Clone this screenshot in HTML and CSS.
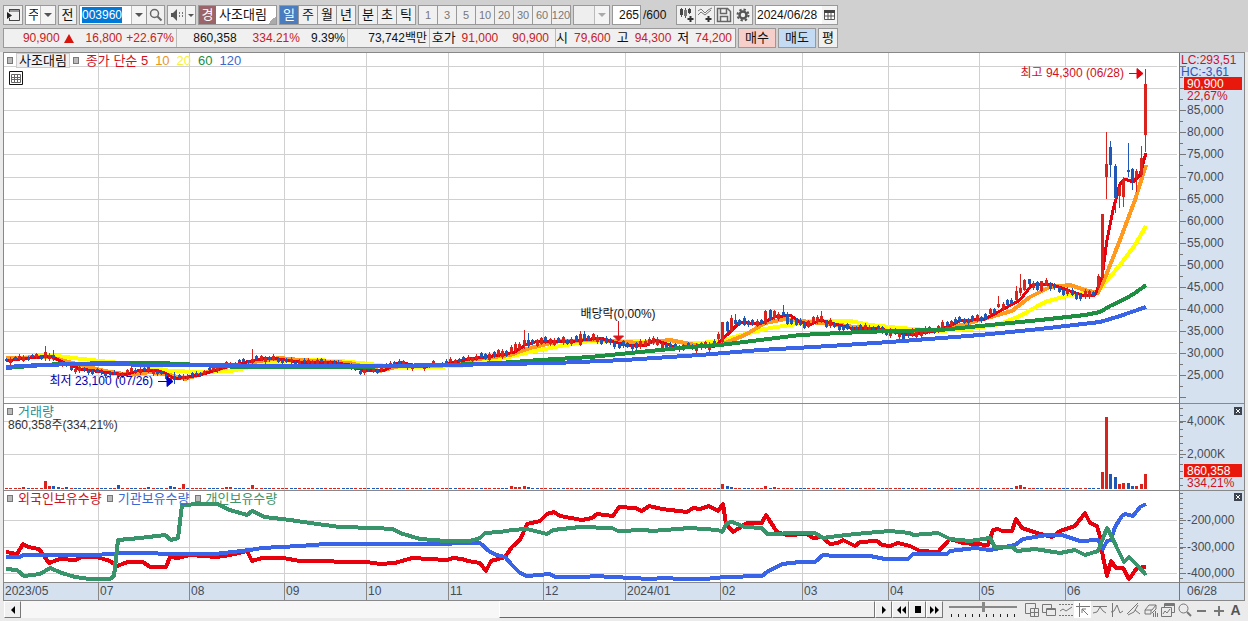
FILE: index.html
```html
<!DOCTYPE html>
<html lang="ko">
<head>
    <meta charset="UTF-8">
    <meta name="viewport" content="width=device-width, initial-scale=1.0">
    <title>사조대림</title>
    <link rel="stylesheet" href="styles.css">
</head>
<body>

    <header class="toolbar">
        <div class="tool-row">
            <button type="button" class="btn icon-btn" aria-label="Menu">
                <svg width="16" height="14" viewBox="0 0 16 14"><path d="M4.5 1.5h10v11h-10M4.5 1v3M4.5 10v3" fill="none" stroke="#444"/><path d="M5 3h9" stroke="#444"/><path d="M2 4l5 3.500-5 3.500z" fill="#222"/></svg>
            </button>
            <div class="combo combo-small">
                <select aria-label="Type"><option>주</option></select>
                <span class="arrow"></span>
            </div>
            <button type="button" class="btn btn-thin">전</button>
            <div class="group">
                <div class="combo combo-code">
                    <input type="text" id="code" value="003960" aria-label="Code">
                    <button type="button" class="arrow" aria-label="History"></button>
                </div>
                <button type="button" class="btn btn-thin icon-btn" aria-label="Search">
                    <svg width="14" height="14" viewBox="0 0 14 14"><circle cx="5.500" cy="5.500" r="4" fill="none" stroke="#666" stroke-width="1.500"/><path d="M8.500 8.500l4 4" stroke="#666" stroke-width="2"/></svg>
                </button>
            </div>
            <div class="group">
                <button type="button" class="btn btn-thin icon-btn" aria-label="Sound">
                    <svg width="14" height="12" viewBox="0 0 14 12"><path d="M1 4h2l4-4v12l-4-4H1z" fill="#555"/><path d="M9.500 3v6M12.500 3v6" stroke="#777" stroke-dasharray="2 1"/></svg>
                </button>
                <button type="button" class="arrow arrow-thin" aria-label="Sound options"></button>
            </div>
            <div class="stock"><span class="badge">경</span><span class="stock-name">사조대림</span></div>
            <div class="group">
                <button type="button" class="btn active">일</button><button type="button" class="btn">주</button><button type="button" class="btn">월</button><button type="button" class="btn">년</button>
            </div>
            <div class="group">
                <button type="button" class="btn">분</button><button type="button" class="btn">초</button><button type="button" class="btn">틱</button>
            </div>
            <div class="group muted">
                <button type="button" class="btn">1</button><button type="button" class="btn">3</button><button type="button" class="btn">5</button><button type="button" class="btn">10</button><button type="button" class="btn">20</button><button type="button" class="btn">30</button><button type="button" class="btn">60</button><button type="button" class="btn">120</button>
            </div>
            <div class="combo combo-off">
                <select aria-label="Interval" disabled><option></option></select>
                <span class="arrow"></span>
            </div>
            <div class="count">
                <input type="text" id="count" value="265" aria-label="Count"><label for="count">/600</label>
            </div>
            <div class="group">
                <button type="button" class="btn icon-btn" aria-label="Add candles">
                    <svg width="16" height="16" viewBox="0 0 16 16"><path d="M3.500 1v9M7.500 1v10M11.500 1v6" stroke="#555"/><path d="M2 2h3v6H2zM10 2h3v4h-3z" fill="#444"/><path d="M6 3h3v6H6z" fill="#777"/><path d="M12.500 9v6M9.500 12h6" stroke="#333" stroke-width="2"/></svg>
                </button>
                <button type="button" class="btn icon-btn" aria-label="Add indicator">
                    <svg width="16" height="16" viewBox="0 0 16 16"><path d="M1 4l3-2 4 4 3-3 4-2M1 8l3-3 4 3 6-5" fill="none" stroke="#777"/><path d="M11.500 9v6M8.500 12h6" stroke="#333" stroke-width="2"/></svg>
                </button>
                <button type="button" class="btn icon-btn" aria-label="Save">
                    <svg width="16" height="16" viewBox="0 0 16 16"><path d="M1.500 1.500h10l3 3v10h-13zM4.500 1.500v5h6v-5M4.500 14.500v-5h7v5" fill="none" stroke="#666" stroke-width="1.500"/></svg>
                </button>
                <button type="button" class="btn icon-btn" aria-label="Settings">
                    <svg width="16" height="16" viewBox="0 0 16 16"><circle cx="8" cy="8" r="5.500" fill="none" stroke="#555" stroke-width="2" stroke-dasharray="2.300 2"/><circle cx="8" cy="8" r="3.500" fill="none" stroke="#555" stroke-width="2.500"/></svg>
                </button>
            </div>
            <div class="combo combo-date">
                <input type="text" value="2024/06/28" aria-label="Date">
                <button type="button" class="cal" aria-label="Calendar">
                    <svg width="11" height="10" viewBox="0 0 11 10"><path d="M.5.500h10v9H.5zM4 3v6M7 3v6M1 6h9" fill="#fff" stroke="#555"/><path d="M0 0h11v3H0z" fill="#444"/></svg>
                </button>
            </div>
        </div>

        <div class="tool-row">
            <div class="quote">
                <div class="cell cell-price up"><span>90,900</span><span class="tri"></span><span class="diff">16,800</span><span>+22.67%</span></div>
                <div class="cell cell-vol"><span>860,358</span><span class="up">334.21%</span><span class="rate">9.39%</span></div>
                <div class="cell cell-amt"><span>73,742백만</span></div>
                <div class="cell cell-ask"><span class="ko">호가</span><span class="up">91,000</span><span class="up bid">90,900</span></div>
                <div class="cell cell-ohl"><span class="ko">시</span><span class="up">79,600</span><span class="ko">고</span><span class="up">94,300</span><span class="ko">저</span><span class="up">74,200</span></div>
            </div>
            <button type="button" class="btn ko buy">매수</button>
            <button type="button" class="btn ko sell">매도</button>
            <button type="button" class="btn">평</button>
        </div>
    </header>

    <main class="chart">
        <section class="pane pane-price">
            <svg class="plot" id="price"></svg>
            <div class="legend">
                <i class="dot"></i><button type="button" class="tag">사조대림</button><i class="dot"></i>
                <span class="ma5">종가 단순 5</span><span class="ma10">10</span><span class="ma20">20</span><span class="ma60">60</span><span class="ma120">120</span>
            </div>
            <button type="button" class="table-btn" aria-label="Table">
                <svg width="14" height="14" viewBox="0 0 14 14"><path d="M.5.500h13v13H.5z" fill="#fff" stroke="#111"/><path d="M2.500 3.500h9v8h-9zM2.500 6.500h9M2.500 8.500h9M5.500 3v8M8.500 3v8" fill="none" stroke="#666"/></svg>
            </button>
        </section>
        <svg class="axis" id="priceAxis"></svg>

        <section class="pane">
            <svg class="plot" id="volume"></svg>
            <div class="legend"><i class="dot"></i><span class="teal">거래량</span></div>
            <div class="volume-now">860,358주(334,21%)</div>
        </section>
        <svg class="axis" id="volumeAxis"></svg>

        <section class="pane">
            <svg class="plot" id="holding"></svg>
            <div class="legend">
                <i class="dot"></i><span class="foreign">외국인보유수량</span><i class="dot"></i><span class="inst">기관보유수량</span><i class="dot"></i><span class="person">개인보유수량</span>
            </div>
        </section>
        <svg class="axis" id="holdingAxis"></svg>

        <svg class="dates" id="dates"></svg>
        <div class="last-date">06/28</div>
    </main>

    <footer class="bottom">
        <div class="scroll">
            <button type="button" class="nav" aria-label="Scroll left"><svg width="6" height="8" viewBox="0 0 6 8"><path d="M5 0v8L1 4z"/></svg></button>
            <div class="track"><div class="thumb"></div></div>
        </div>
        <div class="player">
            <button type="button" class="nav" aria-label="Play"><svg width="6" height="8" viewBox="0 0 6 8"><path d="M1 0v8l4-4z"/></svg></button>
            <button type="button" class="nav" aria-label="Back"><svg width="10" height="8" viewBox="0 0 10 8"><path d="M5 0v8L1 4zM10 0v8L6 4z"/></svg></button>
            <button type="button" class="nav" aria-label="Stop"><svg width="6" height="7" viewBox="0 0 6 7"><path d="M0 0h6v7H0z"/></svg></button>
            <button type="button" class="nav" aria-label="Forward"><svg width="10" height="8" viewBox="0 0 10 8"><path d="M0 0v8l4-4zM5 0v8l4-4z"/></svg></button>
        </div>
        <div class="speed">
            <input type="range" min="0" max="10" value="5" aria-label="Speed">
            <div class="ticks"></div>
        </div>
        <div class="tools">
            <button type="button" aria-label="New"><svg width="14" height="14" viewBox="0 0 14 14"><path d="M5 10.500H.5v-10h10V5M5.500 5.500h8v8h-8zM9.500 6v7M6 9.500h7"/></svg></button>
            <button type="button" aria-label="Copy"><svg width="14" height="14" viewBox="0 0 14 14"><path d="M4 9.500H.5v-8h9V5M4.500 5.500h9v7h-9z"/><path d="M5 6.500h8"/></svg></button>
            <button type="button" aria-label="Fit"><svg width="14" height="14" viewBox="0 0 14 14"><path d="M1 8l3-2 3 2 6-4"/><path d="M0 1.500h14M0 12.500h14" stroke-dasharray="2 1"/></svg></button>
            <button type="button" class="on" aria-label="Cursor"><svg width="14" height="14" viewBox="0 0 14 14"><path d="M0 3.500h14M3.500 0v14M6 6l6 6M6 10V6h4"/></svg></button>
            <button type="button" aria-label="Level"><svg width="14" height="14" viewBox="0 0 14 14"><path d="M0 3.500h14M0 10l4-1 3-5 3 4 3 2"/></svg></button>
            <button type="button" aria-label="Bars"><svg width="14" height="14" viewBox="0 0 14 14"><path d="M2.500 0v14M1 9l3-1 3-6 3 8 3-2"/></svg></button>
            <button type="button" aria-label="Trend"><svg width="14" height="14" viewBox="0 0 14 14"><path d="M0 11L11 0M1 12l6-3 4-7M8 7l5 4"/></svg></button>
            <button type="button" aria-label="Erase"><svg width="14" height="14" viewBox="0 0 14 14"><path d="M1 7l4-5h7l-4 5zM1 7v4h6V7M8 10l4-4V2M9.500 10v4M11.500 8v6M13.500 10v4"/></svg></button>
            <button type="button" aria-label="Windows"><svg width="14" height="14" viewBox="0 0 14 14"><path d="M.5 4.500h10v9H.5zM3.500 4V.5h10v9H11M2 11l2-3 2 2 3-4"/><path d="M4 2h9" stroke-width="2"/></svg></button>
            <button type="button" aria-label="Zoom"><svg width="14" height="14" viewBox="0 0 14 14"><circle cx="5.500" cy="5.500" r="4.500"/><path d="M9 9l4 4" stroke-width="2"/></svg></button>
            <button type="button" aria-label="Zoom out"><svg width="14" height="14" viewBox="0 0 14 14"><path d="M2 8h9" stroke-width="2"/></svg></button>
            <button type="button" aria-label="Zoom in"><svg width="14" height="14" viewBox="0 0 14 14"><path d="M2 8h10M7 3v10" stroke-width="2"/></svg></button>
            <button type="button" class="letter">A</button>
        </div>
    </footer>

    <script src="script.js"></script>
</body>
</html>
```
FILE: styles.css
```css
* {
    box-sizing: border-box;
    margin: 0;
    padding: 0;
}

body {
    height: 100vh;
    min-height: 500px;
    display: flex;
    flex-direction: column;
    background: #ebebeb;
    color: #111;
    font-family: "Liberation Sans", "Noto Sans CJK KR", sans-serif;
    font-size: 12px;
    line-height: 16px;
    overflow: hidden;
}

button,
input,
select {
    font: inherit;
    color: inherit;
    border: 0;
    border-radius: 0;
    background: none;
    outline: none;
    appearance: none;
}

svg {
    display: block;
    flex: none;
}

.ko {
    font-size: 13px;
}

/* toolbar */
.toolbar {
    background: #d0d0d0;
    padding: 5px 3px 4px;
    display: flex;
    flex-direction: column;
    gap: 3px;
}

.tool-row {
    display: flex;
    gap: 2px;
    height: 20px;
}

.group {
    display: flex;
}

.group > * + * {
    margin-left: -1px;
}

.btn {
    width: 20px;
    height: 20px;
    border: 1px solid #999;
    background: #f0f0f0;
    font-size: 13px;
    text-align: center;
    white-space: nowrap;
}

.btn-thin {
    width: 19px;
}

.icon-btn {
    display: flex;
    align-items: center;
    justify-content: center;
}

.btn.active {
    background: #4a7cc0;
    color: #fff;
}

.muted .btn {
    display: flex;
    align-items: center;
    justify-content: center;
    color: #777;
    font-size: 11px;
}

.combo {
    display: flex;
    height: 20px;
    border: 1px solid #999;
    background: #fff;
}

.combo select,
.combo input {
    flex: 1;
    min-width: 0;
    padding: 0 2px;
}

.arrow {
    flex: none;
    width: 15px;
    border-left: 1px solid #bbb;
    background: #f4f4f4;
    display: flex;
    align-items: center;
    justify-content: center;
}

.arrow::after {
    content: "";
    border: 4px solid transparent;
    border-top-color: #555;
    border-bottom: 0;
}

.arrow-thin {
    width: 11px;
    border: 1px solid #999;
}

.arrow-thin::after {
    border-width: 3px;
    border-bottom: 0;
}

.combo-small {
    width: 31px;
    font-size: 13px;
}

.combo-code {
    width: 68px;
}

.combo-code ::selection {
    background: #0078d7;
    color: #fff;
}

.combo-off {
    width: 37px;
    background: #eee;
}

.combo-off .arrow::after {
    border-top-color: #aaa;
}

.combo-date {
    width: 83px;
}

.combo-date input {
    padding: 0 1px;
}

.cal {
    width: 15px;
    display: flex;
    align-items: center;
    justify-content: center;
    background: #f4f4f4;
}

.stock {
    display: flex;
    width: 79px;
    border: 1px solid #999;
    background: linear-gradient(135deg, transparent 50%, #aaa 50%) right bottom / 8px 8px no-repeat #fff;
    font-size: 13px;
    line-height: 18px;
}

.badge {
    width: 17px;
    background: #9a6468;
    color: #fff;
    text-align: center;
}

.stock-name {
    padding-left: 3px;
}

.count {
    display: flex;
    width: 62px;
    line-height: 20px;
}

.count input {
    width: 29px;
    border: 1px solid #999;
    background: #fff;
    text-align: right;
    padding-right: 1px;
}

.count label {
    padding-left: 2px;
}

.quote {
    display: flex;
    border: 1px solid #999;
    background: #f0f0f0;
    line-height: 18px;
    white-space: nowrap;
}

.cell {
    display: flex;
    justify-content: flex-end;
    align-items: center;
    gap: 6px;
    padding-right: 2px;
}

.cell + .cell {
    border-left: 1px solid #bbb;
}

.up {
    color: #c8201e;
}

.tri {
    border: 5px solid transparent;
    border-bottom: 9px solid #d8140c;
    border-top: 0;
}

.cell-price {
    width: 172px;
    gap: 4px;
}

.diff {
    margin-left: 8px;
}

.cell-vol {
    width: 171px;
}

.cell-vol .up {
    margin-left: 10px;
}

.rate {
    margin-left: 5px;
}

.cell-amt {
    width: 82px;
}

.cell-ask {
    width: 126px;
    padding-right: 6px;
}

.bid {
    margin-left: 8px;
}

.cell-ohl {
    width: 180px;
    padding-right: 3px;
}

.buy,
.sell {
    width: 38px;
}

.buy {
    background: #f6cfca;
}

.sell {
    background: #c3dcf4;
}

/* chart */
.chart {
    flex: 1;
    min-height: 0;
    margin: 0 3px;
    border: 1px solid #888;
    display: grid;
    grid-template-columns: 1fr 65px;
    grid-template-rows: minmax(0, 351fr) minmax(0, 87fr) minmax(0, 92fr) 17px;
    background: #fff;
}

.pane {
    position: relative;
    border-bottom: 1px solid #888;
    min-width: 0;
}

.plot,
.axis,
.dates {
    width: 100%;
    height: 100%;
}

.plot {
    position: absolute;
    inset: 0;
}

.axis,
.dates,
.last-date {
    background: #d5e1ee;
    color: #444c58;
}

.axis {
    border-bottom: 1px solid #888;
    border-left: 1px solid #777;
}

.chart text {
    fill: currentColor;
}

.chart .red {
    fill: #d0101c;
}

.chart .blue {
    fill: #2a56c0;
}

.chart .white {
    fill: #fff;
}

.chart .navy {
    fill: #0000b0;
}

.last-date {
    padding-left: 7px;
    border-left: 1px solid #777;
}

.legend {
    position: relative;
    display: flex;
    align-items: center;
    gap: 5px;
    height: 15px;
    padding-left: 3px;
    font-size: 13px;
}

.pane-price .legend {
    gap: 7px;
}

.legend .tag {
    height: 15px;
    line-height: 13px;
    padding: 0 2px;
    border: 1px solid #ccc;
    background: #f0f0f0;
    margin: 0 -4px;
}

.dot {
    width: 6px;
    height: 7px;
    border: 1px solid #777;
    background: #bbb;
}

.table-btn {
    position: relative;
    display: block;
    margin: 3px 5px;
}

.volume-now {
    position: relative;
    line-height: 13px;
    padding-left: 4px;
    color: #333;
}

.ma5 { color: #d0101c; }
.ma10 { color: #e8961e; }
.ma20 { color: #f6f03c; }
.ma60 { color: #1c8c40; }
.ma120 { color: #3a68d0; }
.teal { color: #2a8c90; }
.foreign { color: #d0101c; }
.inst { color: #3a68d0; }
.person { color: #3c9468; }

/* bottom bar */
.bottom {
    display: flex;
    height: 20px;
    padding: 0 4px 3px;
    align-items: stretch;
}

.scroll {
    flex: 1;
    display: flex;
}

.nav {
    width: 17px;
    display: flex;
    align-items: center;
    justify-content: center;
    border: 1px solid;
    border-color: #fff #777 #777 #fff;
    background: #f0f0f0;
}

.track {
    flex: 1;
    background: #f7f7f7;
    display: flex;
    justify-content: flex-end;
}

.thumb {
    width: 44%;
    background: #f0f0f0;
    border: 1px solid;
    border-color: #fff #777 #666 #fff;
}

.player {
    display: flex;
}

.speed {
    width: 68px;
    margin: 0 6px;
}

.speed input {
    display: block;
    width: 100%;
    height: 12px;
    background: linear-gradient(#888, #888) center 5px / 100% 2px no-repeat;
}

.speed input::-webkit-slider-thumb {
    appearance: none;
    width: 3px;
    height: 10px;
    background: #888;
}

.ticks {
    height: 3px;
    margin: 1px 0 0 2px;
    background: repeating-linear-gradient(90deg, #222 0 1px, transparent 1px 7px);
}

.tools {
    display: flex;
}

.tools button {
    width: 17px;
    display: flex;
    align-items: center;
    justify-content: center;
}

.tools .on {
    background: #fff;
}

.tools svg {
    fill: none;
    stroke: #777;
}

.tools .letter {
    font-weight: bold;
    font-size: 14px;
    color: #555;
}
```
FILE: script.js
```js
// plot units: 1175 wide, panes 350 / 86 / 91 high, origin at x=4, y=53
const W = 1175;
const COUNT = 265;
const months = [
    [98, '07'], [189, '08'], [284, '09'], [366, '10'], [448, '11'], [543, '12'],
    [625, '2024/01'], [720, '02'], [802, '03'], [888, '04'], [979, '05'], [1065, '06']
];

const ma5 = '6,361 20,359 50,356 65,363 80,369 95,371 110,373 125,375 140,370 155,370 165,373 175,379 200,375 230,366 255,360 270,358 300,362 330,362 350,365 365,371 385,370 400,362 420,367 445,364 470,359 500,355 515,352 525,345 535,342 555,341 575,341 600,338 625,345 645,346 655,340 675,347 690,347 715,346 728,334 740,322 760,324 775,317 790,315 800,322 810,325 820,320 850,328 880,329 910,335 940,330 960,321 985,319 1000,311 1020,300 1032,285 1050,284 1070,291 1085,296 1095,295 1102,277 1107,240 1113,210 1120,184 1125,179 1133,182 1140,175 1146,153';
const ma10 = '6,358 50,357 80,365 105,371 130,375 150,372 170,375 185,379 205,373 230,366 260,361 280,358 300,360 350,363 380,371 400,366 440,366 470,360 510,355 530,348 560,341 600,340 640,343 670,340 700,346 720,345 745,335 765,323 785,319 810,322 840,325 870,329 910,334 950,328 980,320 1012,311 1030,297 1050,287 1070,285 1085,290 1098,293 1105,278 1120,240 1135,200 1146,165';
const ma20 = '6,359 20,358 50,355 65,357 100,361 130,364 150,367 170,371 200,372 230,371 260,365 285,361 310,360 340,361 370,364 395,367 430,367 460,366 500,359 530,352 560,346 590,341 620,341 660,342 700,343 720,341 745,334 770,328 790,325 810,321 850,321 870,325 900,328 940,331 970,329 1000,324 1020,316 1045,302 1070,295 1085,293 1097,292 1105,283 1120,265 1135,245 1146,226';
const ma60 = '6,368 30,366 60,364 120,363 160,363 200,365 240,367 350,367 400,366 448,365 500,363 540,360 590,357 640,352 690,347 720,345 760,340 800,335 840,333 890,331 940,330 980,326 1000,324 1040,320 1085,315 1100,312 1110,306 1125,299 1135,293 1146,285';
const ma120 = '6,367 40,365 80,364 180,365 300,366 380,366 448,365 500,364 555,363 625,360 700,355 760,350 830,346 890,342 980,335 1040,329 1100,322 1120,316 1146,307';

const foreign = '6,552 17,554 23,544 28,547 39,549 49,563 60,559 75,560 82,557 97,557 110,561 117,566 128,562 143,562 150,567 166,567 170,557 178,558 190,555 217,557 230,555 247,551 252,561 262,558 283,558 300,561 328,561 340,562 367,562 380,564 395,563 412,558 447,560 453,558 462,559 468,561 480,563 486,571 491,561 505,557 512,547 520,540 527,524 540,521 547,514 554,512 560,516 582,520 592,518 597,514 613,516 619,507 635,508 642,511 649,506 662,509 687,512 693,508 700,509 709,506 718,511 723,504 726,524 733,532 747,523 762,523 766,515 777,532 787,535 807,534 813,538 822,537 830,544 838,543 843,540 855,546 860,542 877,541 882,545 890,546 898,543 910,546 920,551 938,552 950,539 963,543 988,545 993,530 998,529 1002,531 1012,531 1016,519 1022,528 1037,533 1052,537 1060,531 1075,526 1085,513 1090,523 1097,526 1100,537 1103,557 1107,576 1111,561 1116,568 1123,568 1129,579 1137,568 1146,567';
const inst = '6,557 20,557 23,555 95,555 125,553 190,554 215,554 250,550 262,548 300,546 325,544 425,544 480,543 490,552 497,555 505,557 512,565 520,573 527,576 550,574 555,577 585,577 595,576 650,579 665,578 680,579 705,579 725,577 762,576 767,572 782,564 800,562 815,562 823,555 835,556 870,556 885,559 908,559 913,554 947,554 950,551 975,548 990,550 1015,545 1023,539 1047,535 1062,535 1080,541 1098,540 1103,549 1107,541 1111,540 1115,527 1122,516 1125,514 1133,516 1140,507 1146,504';
const person = '6,569 17,570 24,576 40,574 50,568 62,573 75,577 90,579 110,579 114,576 118,540 140,538 165,535 171,540 178,538 182,505 200,504 217,504 230,510 247,515 252,511 265,517 290,520 310,523 340,527 375,528 393,529 400,533 420,539 447,541 470,541 480,538 485,533 500,532 512,530 527,529 547,534 553,530 580,527 612,528 618,531 645,530 652,531 690,528 718,530 722,532 727,523 732,522 745,527 762,528 767,534 800,533 815,533 823,538 830,537 855,534 890,531 910,533 913,535 938,533 950,539 970,541 990,538 995,547 1012,547 1017,551 1035,549 1060,553 1075,550 1085,555 1098,551 1107,528 1112,537 1117,548 1124,562 1129,557 1138,566 1146,575';

// x, high, body top, body bottom, low, up
const bigCandles = [
    [44, 346, 352, 358, 361, 1], [53, 350, 355, 358, 361, 0], [174, 372, 376, 380, 384, 0], [252, 349, 359, 363, 366, 1],
    [523, 330, 340, 345, 349, 1], [528, 333, 340, 346, 348, 0], [510, 345, 347, 352, 354, 1], [581, 331, 334, 345, 346, 1], [584, 331, 334, 339, 341, 0],
    [722, 322, 322, 342, 343, 1], [727, 321, 322, 331, 333, 0], [731, 315, 318, 331, 333, 1], [735, 314, 320, 324, 326, 0], [744, 316, 318, 325, 326, 0],
    [766, 310, 311, 324, 325, 1], [770, 309, 310, 320, 321, 0], [774, 310, 311, 318, 320, 1], [782, 305, 312, 315, 317, 0], [787, 312, 314, 324, 325, 0],
    [822, 311, 316, 321, 323, 1], [999, 296, 304, 307, 308, 1], [1016, 286, 291, 300, 301, 1], [1021, 274, 288, 293, 296, 1], [1025, 279, 280, 290, 291, 1],
    [1029, 279, 279, 284, 287, 0], [1038, 281, 282, 290, 291, 0], [1042, 281, 281, 291, 292, 1], [1046, 278, 280, 285, 286, 1],
    [1098, 274, 276, 288, 290, 1], [1102, 214, 214, 278, 280, 1], [1106, 132, 164, 177, 199, 1], [1110, 141, 147, 165, 177, 0], [1115, 164, 166, 198, 213, 0],
    [1119, 186, 187, 196, 208, 1], [1123, 177, 180, 197, 207, 1], [1128, 143, 170, 172, 177, 0], [1132, 168, 169, 180, 190, 0],
    [1136, 169, 171, 177, 192, 1], [1141, 146, 158, 175, 177, 1], [1145, 69, 84, 135, 152, 1]
];

// x, height, up
const bigVolumes = [
    [44, 8, 1], [23, 2, 1], [49, 3, 1], [53, 3, 0], [57, 2, 0], [66, 2, 0], [118, 4, 0], [148, 2, 0], [170, 3, 0], [174, 2, 0], [182, 5, 1], [226, 2, 1], [230, 2, 1], [252, 4, 1],
    [510, 3, 1], [515, 2, 1], [519, 2, 1], [523, 3, 1], [528, 2, 0], [722, 5, 1], [727, 3, 0], [731, 2, 0], [766, 3, 1], [774, 2, 1], [1016, 3, 1], [1021, 4, 1], [1025, 2, 1],
    [1102, 17, 1], [1106, 72, 1], [1110, 15, 0], [1115, 12, 0], [1119, 5, 1], [1123, 6, 1], [1128, 6, 0], [1132, 3, 0], [1136, 3, 1], [1141, 5, 1], [1145, 15, 1]
];

const RED = '#d8241c';
const BLUE = '#2058b8';

function points(str) {
    return str.split(' ').map(p => p.split(',').map(Number));
}

function valueAt(pts, x) {
    for (let i = 1; i < pts.length; i++) {
        if (x <= pts[i][0]) {
            const [x0, y0] = pts[i - 1];
            const [x1, y1] = pts[i];
            return y0 + (y1 - y0) * (x - x0) / (x1 - x0);
        }
    }
    return pts[pts.length - 1][1];
}

// scale helpers for one pane
function pane(id, top, height) {
    const el = document.getElementById(id);
    const w = el.clientWidth;
    const h = el.clientHeight;
    return {
        el, w, h,
        x: v => Math.round((v - 4) * w / W),
        y: v => Math.round((v - top) * h / height)
    };
}

function rect(x, y, w, h, fill) {
    return `<rect x="${x}" y="${y}" width="${w}" height="${h}" fill="${fill}"/>`;
}

function text(x, y, str, cls = '', anchor = 'start') {
    return `<text x="${x}" y="${y}" class="${cls}" text-anchor="${anchor}">${str}</text>`;
}

function line(p, str, color, width) {
    const d = points(str).map(([x, y]) => p.x(x) + ',' + p.y(y)).join(' ');
    return `<polyline points="${d}" fill="none" stroke="${color}" stroke-width="${width}" stroke-linejoin="round" shape-rendering="crispEdges"/>`;
}

function grid(p, rows) {
    return months.map(m => rect(p.x(m[0]), 0, 1, p.h, '#d0d0d0')).join('') +
        rows.map(r => rect(0, p.y(r), p.w - 2, 1, '#d0d0d0')).join('');
}

function nearest(list, x) {
    return list.find(c => Math.abs(c[0] - x) < 2.2);
}

function candles(p) {
    const path = points(ma5);
    let out = '';
    for (let i = 0; i < COUNT; i++) {
        const x = 6 + i * 1139 / (COUNT - 1);
        let c = nearest(bigCandles, x);
        if (!c) {
            const n = Math.sin(i * 12.9) * 43758.5;
            const r = n - Math.floor(n);
            const mid = valueAt(path, Math.min(x + 6, 1096)) + Math.sin(i * 1.7) * 1.5;
            const up = valueAt(path, x + 9) <= valueAt(path, x) ? r > 0.4 : r > 0.7;
            const big = x > 480 ? 1 : 0;
            c = [x, mid - 2 - r * 2 - big, mid - 1 - r - big, mid + 1 + r + big, mid + 2 + r * 2 + big, up];
        }
        const color = c[5] ? RED : BLUE;
        const px = p.x(x);
        out += rect(px, p.y(c[1]), 1, Math.max(1, p.y(c[4]) - p.y(c[1])), color);
        out += rect(px - 1, p.y(c[2]), 3, Math.max(2, p.y(c[3]) - p.y(c[2])), color);
    }
    return out;
}

function drawPrice() {
    const p = pane('price', 53, 350);
    const rows = [66, 88, 110, 132, 154, 177, 199, 221, 243, 265, 287, 309, 331, 353, 375, 397];
    let out = grid(p, rows);
    out += line(p, ma20, '#ffff00', 4) + line(p, ma10, '#ff9a1e', 4) + line(p, ma5, '#e8000c', 3);
    out += candles(p);
    out += line(p, ma60, '#1c9040', 4) + line(p, ma120, '#3a64e8', 4);

    const hx = p.x(1144);
    const hy = p.y(73);
    out += text(hx - 20, hy + 4, '최고 94,300 (06/28)', 'red', 'end');
    out += `<path d="M${hx - 15} ${hy + .5}h9M${hx - 1} ${hy + .5}l-6-5v10z" fill="#e8000c" stroke="#e8000c"/>`;

    const lx = p.x(173);
    const ly = p.y(381);
    out += text(lx - 20, ly + 4, '최저 23,100 (07/26)', 'navy', 'end');
    out += `<path d="M${lx - 15} ${ly + .5}h9M${lx} ${ly + .5}l-6-5v10z" fill="#0000d0" stroke="#0000d0"/>`;

    const dx = p.x(618);
    out += text(dx, p.y(318), '배당락(0,00%)', '', 'middle');
    out += `<path d="M${dx + .5} ${p.y(321)}V${p.y(336)}M${dx + .5} ${p.y(341)}l-5-5h10z" fill="#d8141c" stroke="#d8141c"/>`;
    p.el.innerHTML = out;

    const a = pane('priceAxis', 53, 350);
    let ax = '';
    for (let i = 0; i < rows.length; i++) {
        ax += rect(0, a.y(rows[i]), 6, 1, '#777') + rect(0, a.y(rows[i] + 11), 3, 1, '#777');
        if (i > 1 && i < 15) {
            ax += text(7, a.y(rows[i]) + 4, (95 - i * 5) + ',000');
        }
    }
    ax += text(1, a.y(59) + 5, 'LC:293,51', 'red') + text(1, a.y(71) + 5, 'HC:-3,61', 'blue');
    ax += rect(4, a.y(77), 58, 13, '#e8180c') + text(7, a.y(88), '90,900', 'white') + text(7, a.y(100), '22,67%', 'red');
    a.el.innerHTML = ax;
}

function closeIcon(a, y) {
    const t = a.y(y) - 4;
    return rect(54, t, 8, 8, '#3c4450') + `<path d="M56 ${t + 2}l4 4M60 ${t + 2}l-4 4" stroke="#fff"/>`;
}

function drawVolume() {
    const p = pane('volume', 404, 86);
    let out = grid(p, [421, 454]);
    for (let i = 0; i < COUNT; i++) {
        const x = 6 + i * 1139 / (COUNT - 1);
        const v = nearest(bigVolumes, x) || [x, 1, Math.sin(i * 7.3) > -0.3];
        const h = Math.max(1, p.y(489) - p.y(489 - v[1]));
        out += rect(p.x(x) - 1, p.y(489) - h, 3, h, v[2] ? RED : BLUE);
    }
    p.el.innerHTML = out;

    const a = pane('volumeAxis', 404, 86);
    let ax = '';
    for (let y = 408; y < 490; y += 7) {
        ax += rect(0, a.y(y), 3, 1, '#777');
    }
    ax += rect(0, a.y(421), 6, 1, '#777') + rect(0, a.y(454), 6, 1, '#777');
    ax += text(7, a.y(425), '4,000K') + text(7, a.y(458), '2,000K');
    ax += rect(4, a.y(464), 58, 13, '#e8180c') + text(7, a.y(475), '860,358', 'white') + text(7, a.y(487), '334,21%', 'red');
    a.el.innerHTML = ax + closeIcon(a, 411);
}

function drawHolding() {
    const p = pane('holding', 491, 91);
    p.el.innerHTML = grid(p, [520, 547, 573]) + line(p, foreign, '#e8000c', 4) + line(p, inst, '#3a64e8', 4) + line(p, person, '#38946a', 4);

    const a = pane('holdingAxis', 491, 91);
    let ax = '';
    for (let y = 493; y < 582; y += 5) {
        ax += rect(0, a.y(y), 3, 1, '#777');
    }
    [[520, '-200,000'], [547, '-300,000'], [573, '-400,000']].forEach(([y, label]) => {
        ax += rect(0, a.y(y), 6, 1, '#777') + text(7, a.y(y) + 4, label);
    });
    a.el.innerHTML = ax + closeIcon(a, 497);
}

function drawDates() {
    const p = pane('dates', 0, 17);
    p.el.innerHTML = text(1, 12, '2023/05') +
        months.map(m => rect(p.x(m[0]), 0, 1, p.h, '#888') + text(p.x(m[0]) + 2, 12, m[1])).join('');
}

function draw() {
    drawPrice();
    drawVolume();
    drawHolding();
    drawDates();
}

window.addEventListener('resize', draw);
draw();

const code = document.getElementById('code');
code.focus();
code.select();
```
